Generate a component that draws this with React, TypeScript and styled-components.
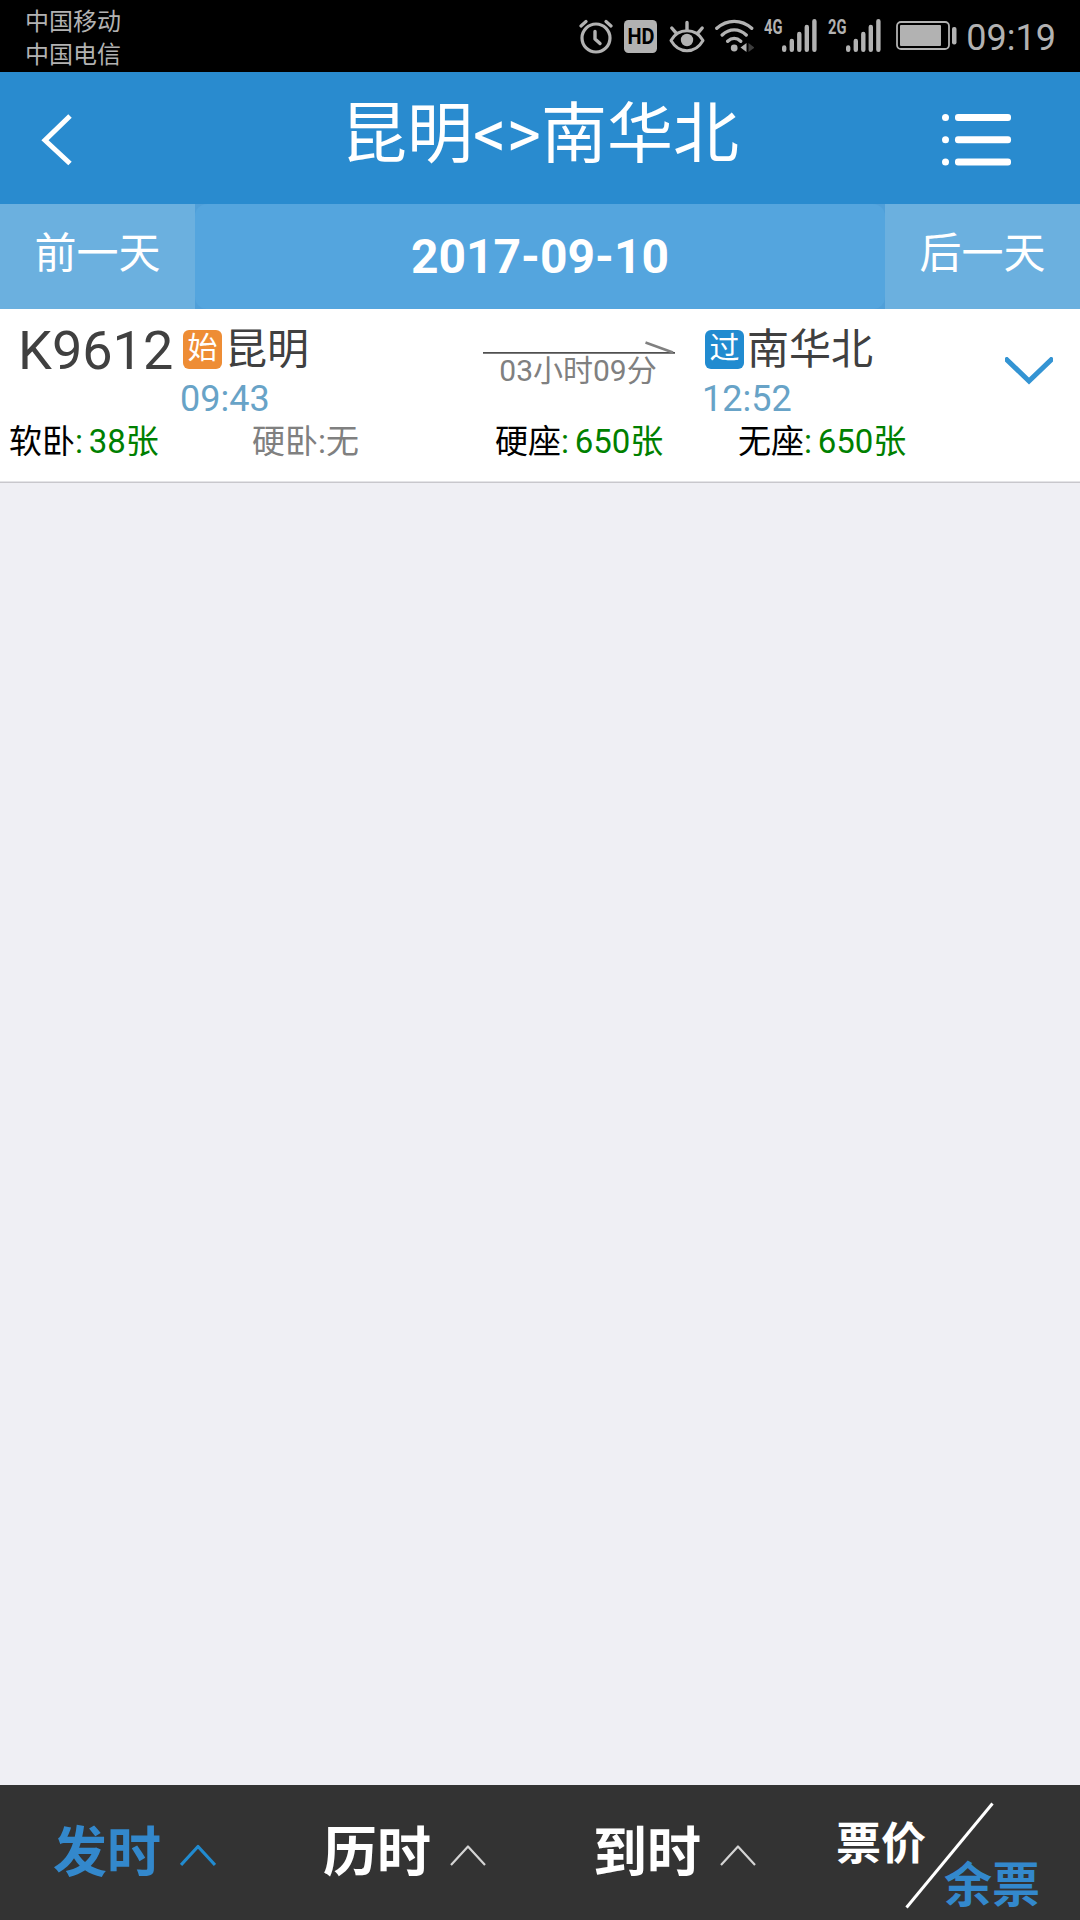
import React from "react";
import styled, { createGlobalStyle } from "styled-components";

const GlobalStyle = createGlobalStyle`
  * { box-sizing: border-box; }
  body {
    margin: 0;
    background: #efeff4;
    font-family: Roboto, "Noto Sans CJK SC", sans-serif;
  }
`;

const Screen = styled.div`
  width: 1080px;
  height: 1920px;
  display: flex;
  flex-direction: column;
  overflow: hidden;
  background: #efeff4;
  svg { display: block; flex: none; }
`;

const StatusBar = styled.div`
  height: 72px;
  flex: none;
  display: flex;
  justify-content: space-between;
  padding: 0 24px 0 25px;
  background: #000;
  color: #b2b2b2;
`;

const Carriers = styled.div`
  padding-top: 6px;
  font-size: 24px;
  line-height: 33px;
`;

const StatusIcons = styled.div`
  display: flex;
  align-items: flex-start;
  padding-top: 18px;
`;

const NetLabel = styled.span`
  width: 18px;
  height: 18px;
  margin-left: 10px;
  font-size: 21px;
  line-height: 18px;
  font-weight: 700;
  white-space: nowrap;
  transform: scaleX(0.7);
  transform-origin: left center;
`;

const Clock = styled.span`
  margin-left: 8px;
  font-size: 36px;
  line-height: 40px;
`;

const Gap = styled.span<{ $w: number }>`
  width: ${(p) => p.$w}px;
  flex: none;
`;

const Header = styled.header`
  height: 132px;
  flex: none;
  display: grid;
  grid-template-columns: 240px 1fr 240px;
  align-items: center;
  background: #298bcf;
  color: #fff;
`;

const HeaderButton = styled.button<{ $left: number }>`
  display: flex;
  padding: 4px 0 0 ${(p) => p.$left}px;
  border: 0;
  background: none;
  color: inherit;
`;

const Title = styled.h1`
  margin: 0;
  padding-bottom: 6px;
  font-size: 66px;
  line-height: 80px;
  font-weight: 400;
  text-align: center;
  white-space: nowrap;
`;

const DayBar = styled.div`
  height: 105px;
  flex: none;
  display: grid;
  grid-template-columns: 195px 1fr 195px;
  background: #4f9fd9;
`;

const DayButton = styled.button`
  padding: 0 0 5px;
  border: 0;
  background: #6bb0df;
  color: #fff;
  font: inherit;
  font-size: 42px;
  line-height: 60px;
`;

const CurrentDay = styled.div`
  display: flex;
  align-items: center;
  justify-content: center;
  border-radius: 12px;
  background: #54a5de;
  color: #fff;
  font-size: 48px;
  font-weight: 700;
`;

const Train = styled.article`
  height: 174px;
  flex: none;
  background: #fff;
  border-bottom: 1px solid #c8c7cc;
  box-shadow: inset 0 -1px 0 #e4e4e7;
`;

const TrainMain = styled.div`
  height: 113px;
  display: grid;
  grid-template-columns: 180px 303px 192px 27px 303px 75px;
`;

const TrainNo = styled.div`
  padding: 14px 0 0 18px;
  font-size: 54px;
  line-height: 55px;
  color: #404040;
`;

const Stop = styled.div`
  padding-top: 21px;
`;

const Station = styled.div`
  height: 39px;
  display: flex;
  align-items: center;
  gap: 3px;
  padding-left: 3px;
  font-size: 42px;
  line-height: 39px;
  color: #404040;
`;

const Badge = styled.span<{ $color: string }>`
  width: 39px;
  height: 39px;
  padding-bottom: 3px;
  border-radius: 6px;
  background: ${(p) => p.$color};
  color: #fff;
  font-size: 30px;
  line-height: 36px;
  text-align: center;
`;

const StopTime = styled.div`
  margin-top: 9px;
  font-size: 36px;
  line-height: 43px;
  color: #68a3c7;
`;

const Duration = styled.div`
  padding-top: 31px;
  text-align: center;
  font-size: 30px;
  line-height: 34px;
  color: #808080;
  white-space: nowrap;
`;

const DurationText = styled.div`
  padding-right: 2px;
`;

const Expand = styled.div`
  grid-column: 6;
  padding-top: 48px;
`;

const Seats = styled.div`
  display: grid;
  grid-template-columns: repeat(4, 243px);
  padding-left: 9px;
  font-size: 33px;
  line-height: 40px;
  white-space: nowrap;
`;

const Seat = styled.div<{ $none: boolean }>`
  color: ${(p) => (p.$none ? "#808080" : "#000")};
`;

const SeatCount = styled.span`
  color: #008000;
  word-spacing: -2.5px;
`;

const TabBar = styled.nav`
  height: 135px;
  flex: none;
  margin-top: auto;
  display: grid;
  grid-template-columns: repeat(4, 270px);
  background: #333;
  font-weight: 700;
`;

const Tab = styled.div<{ $active?: boolean }>`
  display: flex;
  align-items: center;
  gap: 19px;
  padding-left: 53px;
  font-size: 54px;
  line-height: 64px;
  color: ${(p) => (p.$active ? "#3388cc" : "#fff")};
  svg { margin-top: 6px; }
`;

const TabText = styled.span`
  margin-top: 2px;
`;

const PriceTab = styled.div`
  position: relative;
  color: #fff;
`;

const Slash = styled.svg`
  position: absolute;
  left: 90px;
  top: 15px;
`;

const PriceLabel = styled.div`
  padding: 30px 0 0 26px;
  font-size: 45px;
  line-height: 60px;
`;

const LeftLabel = styled.div`
  margin-top: -19px;
  padding-left: 134px;
  font-size: 48px;
  line-height: 60px;
  color: #3388cc;
`;

const Alarm = () => (
  <svg width="34" height="38" viewBox="0 0 34 38" fill="none" stroke="currentColor" strokeLinecap="round" strokeLinejoin="round">
    <circle cx="17" cy="20" r="14" strokeWidth="3.2" />
    <path d="M16 13.5V21l5 4.5" strokeWidth="3.4" />
    <path d="M2 8l5-4.500M32 8l-5-4.500" strokeWidth="3.2" />
  </svg>
);

const Hd = () => (
  <svg width="33" height="38" viewBox="0 0 33 38">
    <rect y="2" width="33" height="33" rx="4.500" fill="currentColor" />
    <text x="17" y="26" textAnchor="middle" textLength="27" lengthAdjust="spacingAndGlyphs" fontSize="21.500" fontWeight="700" fill="#000">HD</text>
  </svg>
);

const Eye = () => (
  <svg width="36" height="38" viewBox="0 0 36 38" fill="none" stroke="currentColor" strokeLinecap="round">
    <path d="M2 22.500C6 15.500 11 12.800 18 12.800s12 2.700 16 9.700c-4 7-9 10.200-16 10.200S6 29.500 2 22.500z" strokeWidth="3" strokeLinejoin="round" />
    <circle cx="18" cy="22" r="6.200" fill="currentColor" stroke="none" />
    <path d="M18 4.500v7M2.800 10l4.400 5.200M33.200 10l-4.400 5.200" strokeWidth="3.400" />
  </svg>
);

const Wifi = () => (
  <svg width="39" height="38" viewBox="0 0 39 38" fill="none" stroke="currentColor" strokeLinecap="round">
    <path d="M1.800 10.300C12 1 26.500 1 36.700 10.300M7.200 17c7-6.800 17-6.800 24 0M12.700 23.300c4-3.700 9-3.700 13 0" strokeWidth="3.400" />
    <circle cx="19.200" cy="30" r="3.400" fill="currentColor" stroke="none" />
    <path d="M25.500 29.500l6-4.500v9z" fill="currentColor" stroke="none" />
    <path d="M33.500 25v9l6-4.500z" fill="#3d3d3d" stroke="none" />
  </svg>
);

const Signal = () => (
  <svg width="35" height="38" viewBox="0 0 35 38" stroke="currentColor" strokeWidth="4.400" strokeLinecap="round">
    <path d="M2.200 29.500v2.300M9.800 23v8.800M17.300 16v15.800M24.800 9v22.800M32.400 3.300v28.500" />
  </svg>
);

const Battery = () => (
  <svg width="62" height="38" viewBox="0 0 62 38">
    <rect x="1" y="4" width="52" height="27" rx="4" fill="none" stroke="currentColor" strokeWidth="1.800" />
    <rect x="4" y="7" width="41" height="21" rx="1" fill="currentColor" />
    <rect x="56" y="9" width="4.500" height="17.500" rx="2" fill="currentColor" />
  </svg>
);

const TabChevron = ({ active }: { active?: boolean }) => (
  <svg width="36" height="23" viewBox="0 0 36 23" fill="none" stroke={active ? "#218bd0" : "#d4d4d4"} strokeWidth={active ? 3.2 : 2.2} strokeLinejoin="round">
    <path d="M1 21L18 2.500 35 21" />
  </svg>
);

const seats = [
  { name: "软卧", count: "38张" },
  { name: "硬卧", count: "" },
  { name: "硬座", count: "650张" },
  { name: "无座", count: "650张" },
];

export default function App() {
  return (
    <Screen>
      <GlobalStyle />
      <StatusBar>
        <Carriers>
          <div>中国移动</div>
          <div>中国电信</div>
        </Carriers>
        <StatusIcons>
          <Alarm />
          <Gap $w={11} />
          <Hd />
          <Gap $w={12} />
          <Eye />
          <Gap $w={10} />
          <Wifi />
          <NetLabel>4G</NetLabel>
          <Signal />
          <Gap $w={1} />
          <NetLabel>2G</NetLabel>
          <Signal />
          <Gap $w={15} />
          <Battery />
          <Clock>09:19</Clock>
        </StatusIcons>
      </StatusBar>

      <Header>
        <HeaderButton $left={41} aria-label="返回">
          <svg width="31" height="52" viewBox="0 0 31 52" fill="none" stroke="currentColor" strokeWidth="5">
            <path d="M29 2L4 26.300 29 49.500" />
          </svg>
        </HeaderButton>
        <Title>昆明&lt;&gt;南华北</Title>
        <HeaderButton $left={102} aria-label="菜单">
          <svg width="70" height="52" viewBox="0 0 70 52" fill="currentColor">
            {[0, 22.3, 44.5].map((y) => (
              <g key={y} transform={`translate(0 ${y})`}>
                <circle cx="3.500" cy="3.500" r="3.500" />
                <rect x="13" width="56" height="7" rx="3" />
              </g>
            ))}
          </svg>
        </HeaderButton>
      </Header>

      <DayBar>
        <DayButton>前一天</DayButton>
        <CurrentDay>2017-09-10</CurrentDay>
        <DayButton>后一天</DayButton>
      </DayBar>

      <Train>
        <TrainMain>
          <TrainNo>K9612</TrainNo>
          <Stop>
            <Station>
              <Badge $color="#ee8d35">始</Badge>昆明
            </Station>
            <StopTime>09:43</StopTime>
          </Stop>
          <Duration>
            <svg width="192" height="14" viewBox="0 0 192 14" fill="none" stroke="#505050">
              <path d="M0 12.800H192" strokeWidth="1.800" />
              <path d="M162.500 2.500L190 12.500" strokeWidth="2.400" stroke="#808080" />
            </svg>
            <DurationText>03小时09分</DurationText>
          </Duration>
          <span />
          <Stop>
            <Station>
              <Badge $color="#218bd0">过</Badge>南华北
            </Station>
            <StopTime>12:52</StopTime>
          </Stop>
          <Expand>
            <svg width="48" height="28" viewBox="0 0 48 28" fill="none" stroke="#3494d3" strokeWidth="5">
              <path d="M0 1L24 24 48 1" />
            </svg>
          </Expand>
        </TrainMain>
        <Seats>
          {seats.map((s) => (
            <Seat key={s.name} $none={!s.count}>
              {s.name}
              {s.count ? <SeatCount>: {s.count}</SeatCount> : ":无"}
            </Seat>
          ))}
        </Seats>
      </Train>

      <TabBar>
        <Tab $active>
          <TabText>发时</TabText>
          <TabChevron active />
        </Tab>
        <Tab>
          <TabText>历时</TabText>
          <TabChevron />
        </Tab>
        <Tab>
          <TabText>到时</TabText>
          <TabChevron />
        </Tab>
        <PriceTab>
          <PriceLabel>票价</PriceLabel>
          <LeftLabel>余票</LeftLabel>
          <Slash width="100" height="120" viewBox="0 0 100 120" stroke="#fff" strokeWidth="3">
            <path d="M92.500 3.500L6.500 107.500" />
          </Slash>
        </PriceTab>
      </TabBar>
    </Screen>
  );
}
